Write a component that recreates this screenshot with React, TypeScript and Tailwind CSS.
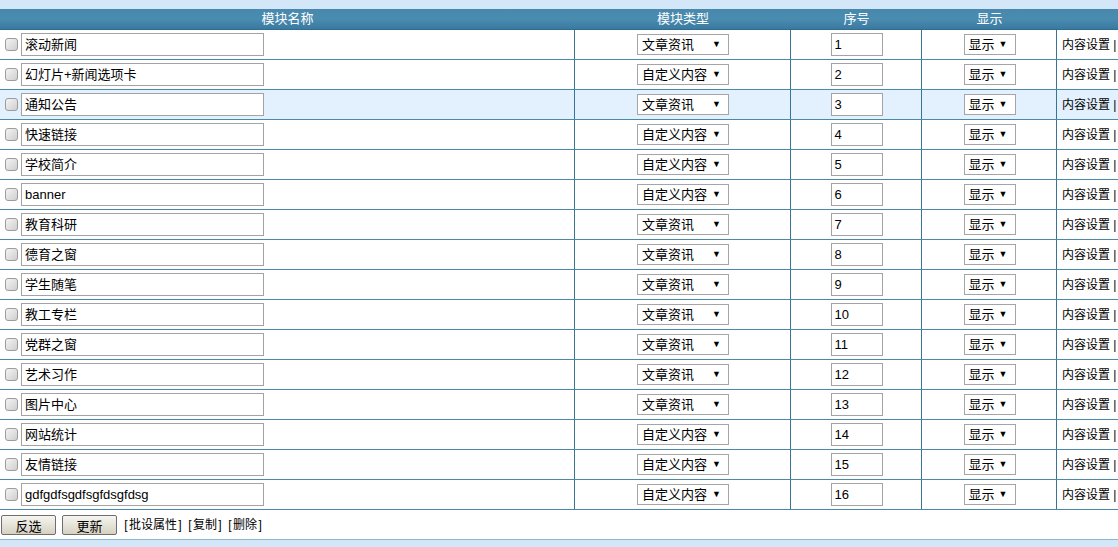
import React from "react";

const rows: [string, string, number][] = [
  ["滚动新闻", "文章资讯", 1],
  ["幻灯片+新闻选项卡", "自定义内容", 2],
  ["通知公告", "文章资讯", 3],
  ["快速链接", "自定义内容", 4],
  ["学校简介", "自定义内容", 5],
  ["banner", "自定义内容", 6],
  ["教育科研", "文章资讯", 7],
  ["德育之窗", "文章资讯", 8],
  ["学生随笔", "文章资讯", 9],
  ["教工专栏", "文章资讯", 10],
  ["党群之窗", "文章资讯", 11],
  ["艺术习作", "文章资讯", 12],
  ["图片中心", "文章资讯", 13],
  ["网站统计", "自定义内容", 14],
  ["友情链接", "自定义内容", 15],
  ["gdfgdfsgdfsgfdsgfdsg", "自定义内容", 16],
];

const font = { fontFamily: '"Liberation Sans", Arial, "Noto Sans CJK SC", sans-serif' };

function Checkbox() {
  return (
    <div className="w-[13px] h-[13px] rounded-[3px] border border-[#9c9c9c] bg-gradient-to-br from-[#f4f4f4] to-[#cfcfcf] shrink-0" />
  );
}

function Select({ label, w }: { label: string; w: string }) {
  return (
    <div className={`${w} h-[21px] border border-[#a5a5a5] bg-white flex items-center justify-between pl-[4px] pr-[7px] text-[13px] text-black`}>
      <span>{label}</span>
      <span className="text-[9px]">▼</span>
    </div>
  );
}

function Link({ label }: { label: string }) {
  return (
    <span className="inline-flex items-center">
      <span className="inline-block w-[6px] text-center">[</span>
      <span>{label}</span>
      <span className="inline-block w-[6px] text-center">]</span>
    </span>
  );
}

export default function App() {
  return (
    <div className="w-[1118px] h-[547px] overflow-hidden bg-white text-[12px] text-black" style={font}>
      <div className="h-[9px] bg-[#d3e7f8]" />
      <div className="grid grid-cols-[575px_216px_131px_135px_1fr] h-[21px] bg-gradient-to-b from-[#4888ad] via-[#4a8bb0] to-[#3b7aa0] text-white text-[13px] border-b border-[#2f6e8e]">
        <div className="flex items-center justify-center">模块名称</div>
        <div className="flex items-center justify-center">模块类型</div>
        <div className="flex items-center justify-center">序号</div>
        <div className="flex items-center justify-center">显示</div>
        <div />
      </div>
      {rows.map(([name, type, n], i) => (
        <div
          key={i}
          className={`grid grid-cols-[575px_216px_131px_135px_1fr] h-[30px] border-b border-[#4a89a8] ${i === 2 ? "bg-[#e2f1fd]" : "bg-white"}`}
        >
          <div className="flex items-center pl-[5px] gap-[3px] border-r border-[#3a7494]">
            <Checkbox />
            <div className="w-[243px] h-[23px] border border-[#a3a3a3] bg-white flex items-center pl-[3px] text-[13px]">
              {name}
            </div>
          </div>
          <div className="flex items-center justify-center pl-[1px] border-r border-[#3a7494]">
            <Select label={type} w="w-[92px]" />
          </div>
          <div className="flex items-center justify-center pl-[1px] border-r border-[#3a7494]">
            <div className="w-[52px] h-[23px] border border-[#a3a3a3] bg-white flex items-center pl-[3px] text-[13px]">
              {n}
            </div>
          </div>
          <div className="flex items-center justify-center pl-[1px] border-r border-[#3a7494]">
            <Select label="显示" w="w-[52px]" />
          </div>
          <div className="flex items-center pl-[5px] text-[12px] whitespace-nowrap overflow-hidden">
            内容设置&nbsp;|
          </div>
        </div>
      ))}
      <div className="h-[29px] flex items-center pl-[1px] pt-[1px]">
        <button className="w-[55px] h-[20px] border border-[#6e6e6e] rounded-[2px] bg-gradient-to-b from-[#f6f5f0] to-[#d6d2c2] text-[13px] leading-none pt-[3px]">
          反选
        </button>
        <button className="ml-[6px] w-[55px] h-[20px] border border-[#6e6e6e] rounded-[2px] bg-gradient-to-b from-[#f6f5f0] to-[#d6d2c2] text-[13px] leading-none pt-[3px]">
          更新
        </button>
        <span className="ml-[6px] flex items-center gap-[4px] text-[12px] text-black">
          <Link label="批设属性" />
          <Link label="复制" />
          <Link label="删除" />
        </span>
      </div>
      <div className="h-[9px] bg-[#d3e7f8] border-t border-[#8cb7d2]" />
    </div>
  );
}
